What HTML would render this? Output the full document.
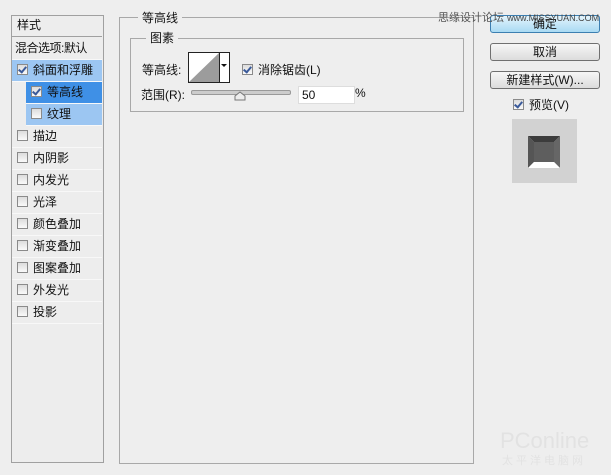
<!DOCTYPE html><html><head><meta charset="utf-8"><style>
body{margin:0;width:611px;height:475px;background:#eeeeee;font-family:"Liberation Sans","Noto Sans CJK SC",sans-serif;font-size:12px;color:#111;position:relative;overflow:hidden}
.a{position:absolute}
.row{position:absolute;left:12px;width:90px;height:21px;line-height:21px;border-bottom:1px solid #f8f8f8}
.cb{display:inline-block;width:9px;height:9px;border:1px solid #8a8a8a;background:linear-gradient(#dcdcdc,#fafafa);vertical-align:-1px;margin:0 5px 0 5px;position:relative}
.cb.on::after{content:"";position:absolute;left:2px;top:0px;width:3px;height:6px;border:solid #3a5a9a;border-width:0 2px 2px 0;transform:rotate(40deg)}
.btn{position:absolute;left:490px;width:108px;height:16px;border:1px solid #707070;border-radius:3px;background:linear-gradient(#f6f6f6,#dcdcdc);text-align:center;line-height:16px;font-size:12px}
</style></head><body>
<div class="a" style="left:11px;top:15px;width:91px;height:446px;border:1px solid #a0a0a0;background:#ededed"></div>
<div class="row" style="top:16px;height:20px;line-height:18px;padding-left:5px;width:85px;border-bottom:1px solid #a0a0a0">样式</div>
<div class="row" style="top:38px;padding-left:3px;width:87px;letter-spacing:-0.5px">混合选项:默认</div>
<div class="row" style="top:60px;background:#9cc6f2"><span class="cb on"></span>斜面和浮雕</div>
<div class="row" style="top:82px;left:26px;width:76px;background:#3f90e6"><span class="cb on"></span>等高线</div>
<div class="row" style="top:104px;left:26px;width:76px;background:#9cc6f2"><span class="cb"></span>纹理</div>
<div class="row" style="top:126px"><span class="cb"></span>描边</div>
<div class="row" style="top:148px"><span class="cb"></span>内阴影</div>
<div class="row" style="top:170px"><span class="cb"></span>内发光</div>
<div class="row" style="top:192px"><span class="cb"></span>光泽</div>
<div class="row" style="top:214px"><span class="cb"></span>颜色叠加</div>
<div class="row" style="top:236px"><span class="cb"></span>渐变叠加</div>
<div class="row" style="top:258px"><span class="cb"></span>图案叠加</div>
<div class="row" style="top:280px"><span class="cb"></span>外发光</div>
<div class="row" style="top:302px"><span class="cb"></span>投影</div>

<div class="a" style="left:119px;top:17px;width:353px;height:445px;border:1px solid #a8a8a8"></div>
<div class="a" style="left:138px;top:9px;padding:0 4px;background:#eee">等高线</div>
<div class="a" style="left:130px;top:38px;width:332px;height:72px;border:1px solid #a8a8a8"></div>
<div class="a" style="left:146px;top:29px;padding:0 4px;background:#eee">图素</div>
<div class="a" style="left:142px;top:61px">等高线:</div>
<div class="a" style="left:188px;top:52px;width:40px;height:29px;border:1px solid #222;background:#fff"></div>
<svg class="a" style="left:189px;top:53px" width="30" height="29"><polygon points="0,29 30,0 30,29" fill="#9c9c9c"/></svg>
<div class="a" style="left:219px;top:53px;width:1px;height:29px;background:#222"></div>
<div class="a" style="left:221px;top:64px;border:3px solid transparent;border-top:3px solid #111"></div>
<div class="a" style="left:238px;top:61px"><span class="cb on" style="margin-left:4px"></span>消除锯齿(L)</div>
<div class="a" style="left:141px;top:86px">范围(R):</div>
<div class="a" style="left:191px;top:90px;width:98px;height:3px;border:1px solid #999;border-radius:2px;background:#ccc"></div>
<svg class="a" style="left:234px;top:91px" width="12" height="10"><polygon points="1,9 1,5 6,1 11,5 11,9" fill="#ececec" stroke="#777"/></svg>
<div class="a" style="left:298px;top:86px;width:52px;height:16px;background:#fff;border:1px solid #ddd;line-height:16px;padding-left:3px">50</div>
<div class="a" style="left:355px;top:86px">%</div>

<div class="btn" style="top:15px;border-color:#3c7fb1;background:linear-gradient(#e4f4fc,#a9daf3)">确定</div>
<div class="btn" style="top:43px">取消</div>
<div class="btn" style="top:71px">新建样式(W)...</div>
<div class="a" style="left:508px;top:96px"><span class="cb on"></span>预览(V)</div>
<div class="a" style="left:512px;top:119px;width:65px;height:64px;background:#d2d2d2"></div>
<svg class="a" style="left:528px;top:136px" width="32" height="32"><polygon points="0,0 32,0 26,6 6,6" fill="#3c3c3c"/><polygon points="0,0 6,6 6,26 0,32" fill="#555"/><polygon points="32,0 32,32 26,26 26,6" fill="#666"/><polygon points="0,32 6,26 26,26 32,32" fill="#fff"/><rect x="6" y="6" width="20" height="20" fill="#5e5e5e"/></svg>
<div class="a" style="left:438px;top:9px;font-size:11px;color:#555">思缘设计论坛 <span style="font-size:9px;color:#444">www.MISSYUAN.COM</span></div>
<div class="a" style="left:500px;top:428px;font-size:22px;color:#e2e2e2">PConline</div>
<div class="a" style="left:502px;top:452px;font-size:11px;color:#e2e2e2;letter-spacing:3px">太平洋电脑网</div>
</body></html>
